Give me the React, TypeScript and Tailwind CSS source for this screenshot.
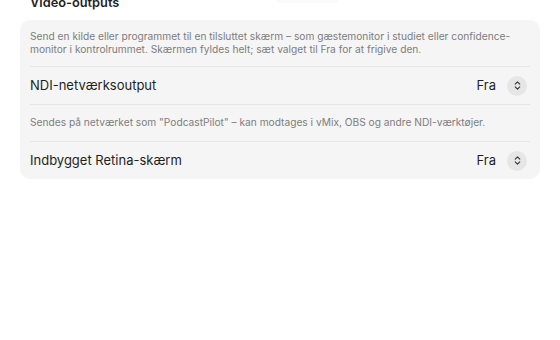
import { ChevronsUpDown } from "lucide-react";

const Stepper = () => (
  <div className="flex items-center gap-[11px] mr-[3px]">
    <span className="text-[13px] text-[#1f1f1f]">Fra</span>
    <div className="w-[20px] h-[20px] rounded-full bg-[#e6e6e6] flex items-center justify-center">
      <ChevronsUpDown size={11} strokeWidth={2.4} className="text-[#333]" />
    </div>
  </div>
);

const Row = ({ label }: { label: string }) => (
  <div className="flex items-center justify-between h-[38px] border-t border-[#e6e6e6]">
    <span className="text-[13px] text-[#1f1f1f]">{label}</span>
    <Stepper />
  </div>
);

const App = () => {
  return (
    <div
      className="w-[560px] h-[340px] bg-white overflow-hidden relative"
      style={{ fontFamily: "Inter, 'Noto Sans', sans-serif" }}
    >
      <div className="absolute left-[276px] top-[-6px] w-[62px] h-[9px] rounded-full bg-[#fafafa]" />
      <div className="relative">
        <div className="px-[30px] -mt-[5px] h-[25px] text-[12.8px] leading-[16px] font-semibold text-[#1f1f1f]">
          Video-outputs
        </div>
        <div className="mx-[20px] rounded-[10px] bg-[#f5f5f5] px-[10px]">
          <p className="pt-[10px] pb-[10px] text-[10.2px] leading-[13px] text-[#7d7d7d] whitespace-nowrap">
            Send en kilde eller programmet til en tilsluttet skærm – som gæstemonitor i studiet eller confidence-
            <br />
            monitor i kontrolrummet. Skærmen fyldes helt; sæt valget til Fra for at frigive den.
          </p>
          <Row label="NDI-netværksoutput" />
          <div className="flex items-center h-[37px] border-t border-[#e6e6e6] text-[10.2px] text-[#7d7d7d]">
            Sendes på netværket som "PodcastPilot" – kan modtages i vMix, OBS og andre NDI-værktøjer.
          </div>
          <Row label="Indbygget Retina-skærm" />
        </div>
      </div>
    </div>
  );
};

export default App;
